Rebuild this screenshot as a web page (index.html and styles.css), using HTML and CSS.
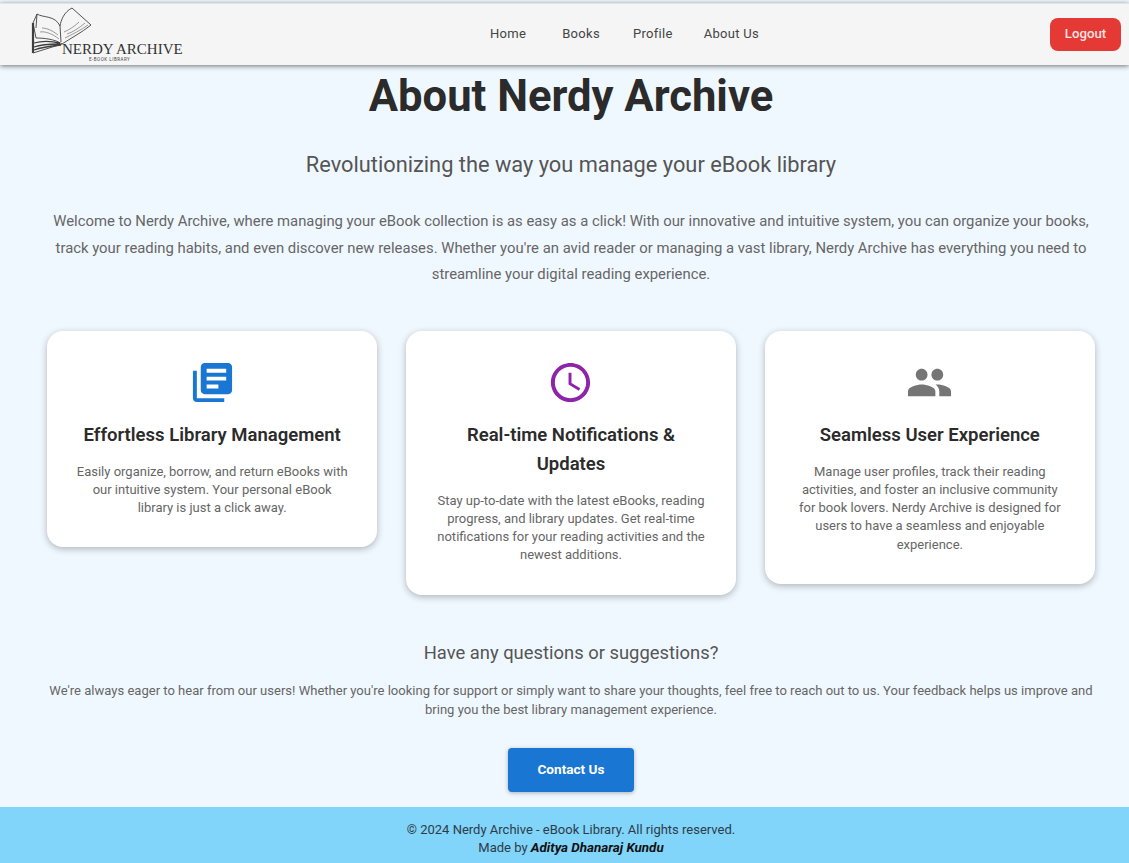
FILE: index.html
```html
<!DOCTYPE html>
<html lang="en">
<head>
<meta charset="utf-8">
<title>About Nerdy Archive</title>
<link rel="stylesheet" href="styles.css">
</head>
<body>
<header class="topbar">
  <div class="brand">
    <svg class="brand-book" viewBox="0 0 62 50" fill="none" stroke="#3f3f3f" stroke-width=".9" aria-hidden="true">
      <path d="M2 17 L2 47 L31 38"/>
      <path d="M6 8 C12 12 24 9 29 20 C30 14 33 6 41 2 L60 19 C50 27 40 32 31 38 C24 33 12 32 5 32 L2 17 L6 8 L5 22"/>
      <path d="M29 20 L30 36"/>
      <path d="M2 17 L2 47" stroke-width="2.2"/>
      <path d="M3 37 C10 35 20 35 29 37 M3 41 C11 38 20 38 29 38 M3 44 C11 41 20 40 30 39" stroke-width="1.3"/>
      <path d="M34 32 C42 28 50 24 57 19 M36 28 C42 26 48 22 54 17 M33 26 C38 24 44 20 48 16 M9 26 C14 25 22 28 28 33 M11 22 C16 22 22 25 27 29" stroke-width=".5"/>
    </svg>
    <span class="brand-name">NERDY ARCHIVE</span>
    <span class="brand-sub">E-BOOK LIBRARY</span>
  </div>
  <nav class="nav">
    <a class="nav-link nav-home">Home</a>
    <a class="nav-link nav-books">Books</a>
    <a class="nav-link nav-profile">Profile</a>
    <a class="nav-link">About Us</a>
  </nav>
  <button class="logout">Logout</button>
</header>
<main class="content">
  <h1 class="title">About Nerdy Archive</h1>
  <h2 class="subtitle">Revolutionizing the way you manage your eBook library</h2>
  <p class="intro">Welcome to Nerdy Archive, where managing your eBook collection is as easy as a click! With our innovative and intuitive system, you can organize your books, track your reading habits, and even discover new releases. Whether you're an avid reader or managing a vast library, Nerdy Archive has everything you need to streamline your digital reading experience.</p>
  <section class="cards">
    <article class="card">
      <svg class="card-icon icon-blue" viewBox="0 0 24 24"><path d="M4 6H2v14c0 1.1.9 2 2 2h14v-2H4V6zm16-4H8c-1.1 0-2 .9-2 2v12c0 1.1.9 2 2 2h12c1.1 0 2-.9 2-2V4c0-1.1-.9-2-2-2zm-1 9H9V9h10v2zm-4 4H9v-2h6v2zm4-8H9V5h10v2z"/></svg>
      <h3 class="card-title">Effortless Library Management</h3>
      <p class="card-text">Easily organize, borrow, and return eBooks with our intuitive system. Your personal eBook library is just a click away.</p>
    </article>
    <article class="card">
      <svg class="card-icon icon-purple" viewBox="0 0 24 24"><path d="M11.99 2C6.47 2 2 6.48 2 12s4.47 10 9.99 10C17.52 22 22 17.52 22 12S17.52 2 11.99 2zM12 20c-4.42 0-8-3.58-8-8s3.58-8 8-8 8 3.58 8 8-3.58 8-8 8z"/><path d="M12.5 7H11v6l5.25 3.15.75-1.23-4.5-2.67z"/></svg>
      <h3 class="card-title">Real-time Notifications &amp; Updates</h3>
      <p class="card-text">Stay up-to-date with the latest eBooks, reading progress, and library updates. Get real-time notifications for your reading activities and the newest additions.</p>
    </article>
    <article class="card">
      <svg class="card-icon icon-grey" viewBox="0 0 24 24"><path d="M16 11c1.66 0 2.99-1.34 2.99-3S17.66 5 16 5c-1.66 0-3 1.34-3 3s1.34 3 3 3zm-8 0c1.66 0 2.99-1.34 2.99-3S9.66 5 8 5C6.34 5 5 6.34 5 8s1.34 3 3 3zm0 2c-2.33 0-7 1.17-7 3.5V19h14v-2.5c0-2.33-4.67-3.5-7-3.5zm8 0c-.29 0-.62.02-.97.05 1.16.84 1.97 1.97 1.97 3.45V19h6v-2.5c0-2.33-4.67-3.5-7-3.5z"/></svg>
      <h3 class="card-title">Seamless User Experience</h3>
      <p class="card-text">Manage user profiles, track their reading activities, and foster an inclusive community for book lovers. Nerdy Archive is designed for users to have a seamless and enjoyable experience.</p>
    </article>
  </section>
  <h4 class="question">Have any questions or suggestions?</h4>
  <p class="feedback">We're always eager to hear from our users! Whether you're looking for support or simply want to share your thoughts, feel free to reach out to us. Your feedback helps us improve and bring you the best library management experience.</p>
  <a class="contact">Contact Us</a>
</main>
<footer class="footer">
  <div>© 2024 Nerdy Archive - eBook Library. All rights reserved.</div>
  <div>Made by <b class="author">Aditya Dhanaraj Kundu</b></div>
</footer>
</body>
</html>
```
FILE: styles.css
```css
* { box-sizing: border-box; }
html, body { margin: 0; height: 100%; }
body {
  display: flex;
  flex-direction: column;
  height: 863px;
  overflow: hidden;
  padding-top: 3px;
  background: #f0f8ff;
  font-family: Roboto, "Liberation Sans", sans-serif;
  color: #555;
}
.topbar {
  display: flex;
  align-items: center;
  height: 62px;
  flex: none;
  padding: 0 8px 0 30px;
  background: #f5f5f5;
  box-shadow: 0 1px 5px rgba(0,0,0,.55);
  border-top: 1px solid #e4e4e4;
  position: relative;
}
.brand { width: 440px; height: 60px; position: relative; flex: none; }
.brand-book { position: absolute; left: 1px; top: 1px; width: 62px; height: 50px; }
.brand-name {
  position: absolute; left: 32px; top: 35px;
  font: 15px/18px "Liberation Serif", serif;
  color: #333;
  white-space: nowrap;
}
.brand-sub {
  position: absolute; left: 59px; top: 52px;
  font: 4.5px/6px Roboto, sans-serif;
  letter-spacing: .5px;
  color: #444;
  white-space: nowrap;
}
.nav { display: flex; font-size: 13px; letter-spacing: .3px; color: #444; padding-bottom: 2px; }
.nav-link { display: block; }
.nav-home { margin-left: 20px; margin-right: 36px; }
.nav-books { margin-right: 33px; }
.nav-profile { margin-right: 31px; }
.logout {
  margin-left: auto;
  width: 71px; height: 33px;
  border: 0; border-radius: 8px;
  background: #e53935;
  color: #fbe4e4;
  font: 500 13.2px Roboto, sans-serif;
  padding-bottom: 3px;
}
.content {
  flex: 1;
  display: flex;
  flex-direction: column;
  align-items: center;
  padding: 0 21px 0 34px;
  text-align: center;
}
.title { margin: 4px 0 0; font-size: 43.6px; line-height: 56px; font-weight: 700; color: #2b2b2b; }
.subtitle { margin: 24px 0 0; font-size: 21.8px; line-height: 32px; font-weight: 400; color: #555; }
.intro { margin: 27px 0 0; width: 1048px; font-size: 14.85px; line-height: 26.5px; color: #666; }
.cards { display: flex; align-items: flex-start; gap: 28.5px; margin-top: 43px; width: 1048px; flex: none; }
.card {
  flex: 1 1 0;
  background: #fff;
  border-radius: 16px;
  padding: 28px 28px 30px;
  box-shadow: 0 2px 7px rgba(0,0,0,.28);
}
.card-icon { display: block; width: 47px; height: 47px; margin: 0 auto; }
.icon-blue { fill: #1976d2; }
.icon-purple { fill: #8e24aa; }
.icon-grey { fill: #757575; }
.card-title { margin: 15px 0 0; font-size: 18.5px; line-height: 29px; font-weight: 600; color: #2b2b2b; }
.card-text { margin: 13px 0 0; font-size: 13px; line-height: 18.25px; color: #666; }
.question { margin: 44px 0 0; font-size: 18.4px; line-height: 28px; font-weight: 400; color: #555; }
.feedback { margin: 14px 0 0; width: 1048px; font-size: 13.04px; line-height: 19px; color: #666; }
.contact {
  display: flex; align-items: center; justify-content: center;
  width: 126px; height: 44px; margin-top: 29px;
  padding-bottom: 2px;
  background: #1976d2; color: #fff;
  border-radius: 4px;
  font-size: 13.6px; font-weight: 700;
  box-shadow: 0 1px 4px rgba(0,0,0,.3);
}
.footer {
  flex: none;
  height: 56px;
  padding: 14px 0 0 13px;
  background: #81d4fa;
  text-align: center;
  font-size: 13px;
  line-height: 18px;
  color: #2d3c46;
}
.author { font-size: 13.4px; font-style: italic; color: #111; }
```
